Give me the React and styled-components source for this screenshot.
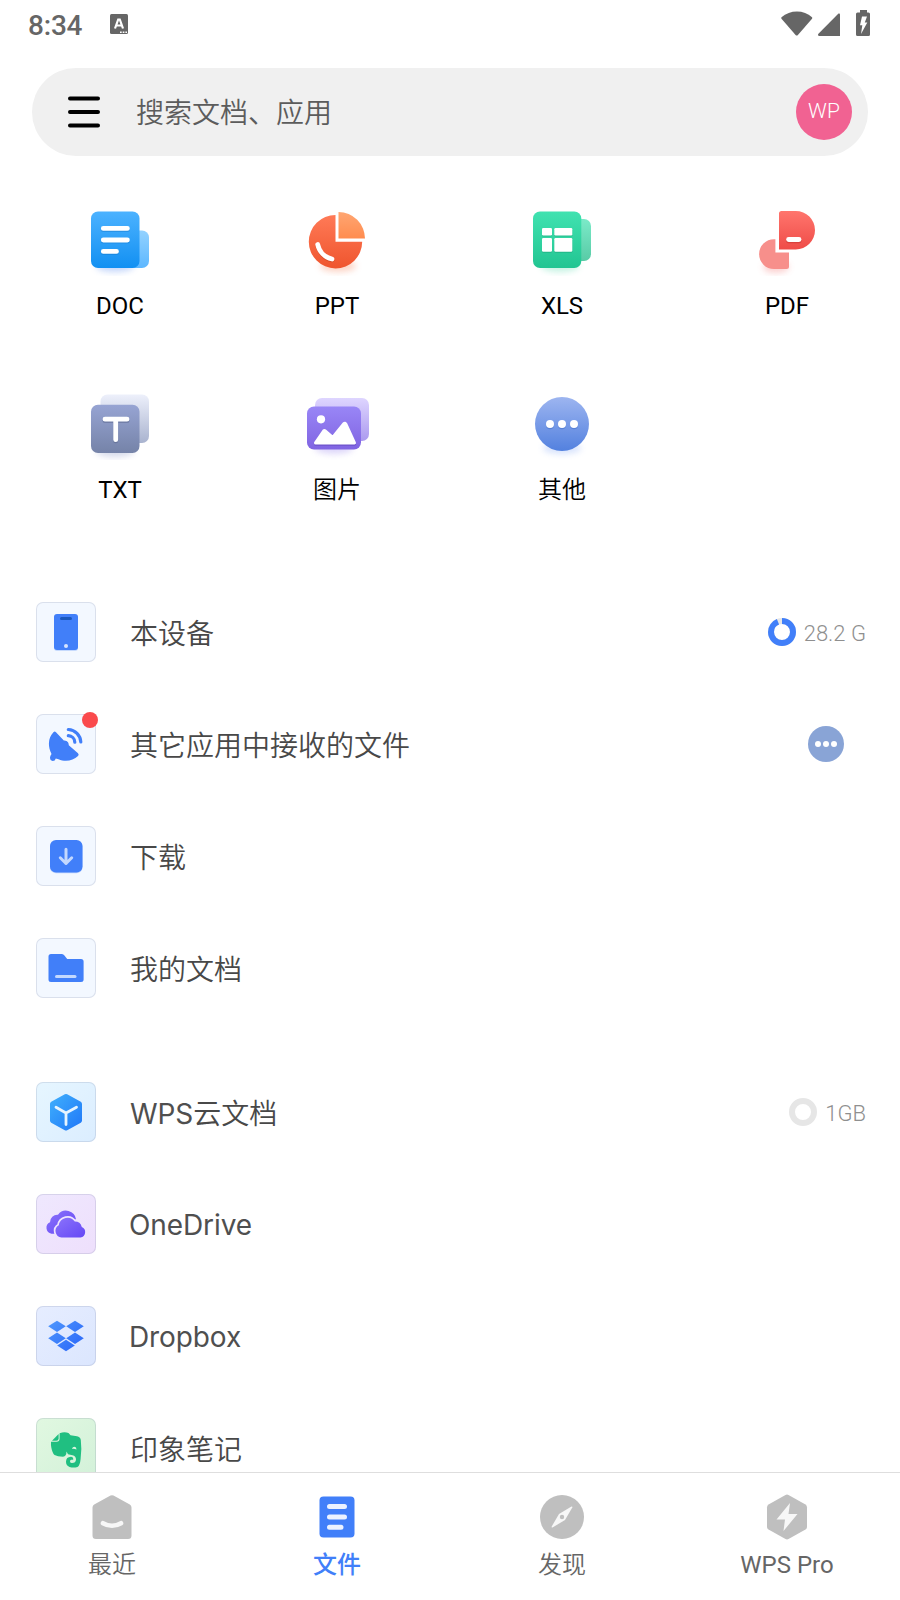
import React from "react";
import styled, { createGlobalStyle } from "styled-components";

const GlobalStyle = createGlobalStyle`
  * {
    box-sizing: border-box;
  }
  body {
    margin: 0;
    background: #fff;
    font-family: Roboto, "Noto Sans CJK SC", sans-serif;
  }
  svg {
    display: block;
  }
`;

const Page = styled.div`
  width: 900px;
  height: 1600px;
  display: flex;
  flex-direction: column;
  overflow: hidden;
  background: #fff;
`;
const StatusBar = styled.div`
  flex: none;
  height: 68px;
  padding: 0 30px 20px 28px;
  display: flex;
  align-items: center;
  color: #666;
`;
const Clock = styled.div`
  font-size: 28px;
  line-height: 32px;
  font-weight: 500;
  letter-spacing: -0.2px;
  margin-top: 3px;
`;
const StatusIcons = styled.div`
  margin-left: auto;
  padding-bottom: 2px;
`;
const InputBadge = styled.div`
  margin-left: 27px;
`;
const SearchBar = styled.div`
  flex: none;
  height: 88px;
  margin: 0 32px;
  padding: 0 16px 0 36px;
  display: flex;
  align-items: center;
  border-radius: 44px;
  background: #f0f0f0;
`;
const Placeholder = styled.div`
  flex: 1;
  margin-left: 36px;
  padding-top: 4px;
  font-size: 28px;
  line-height: 40px;
  font-weight: 350;
  color: #5c5c5c;
`;
const Avatar = styled.div`
  width: 56px;
  height: 56px;
  padding-bottom: 3px;
  display: flex;
  align-items: center;
  justify-content: center;
  border-radius: 50%;
  background: #f16292;
  color: #fff;
  font-size: 21px;
  font-weight: 350;
`;
const Content = styled.div`
  flex: 1;
  min-height: 0;
  overflow: hidden;
`;
const TypeGrid = styled.div`
  padding-top: 48px;
  display: grid;
  grid-template-columns: repeat(4, 225px);
  grid-auto-rows: 184px;
`;
const TypeItem = styled.div`
  display: flex;
  flex-direction: column;
  align-items: center;
  gap: 16px;
  padding-left: ${({ $shifted }) => ($shifted ? "16px" : "0")};
  padding-right: 1px;
`;
const TypeLabel = styled.div`
  font-size: 24px;
  line-height: 28px;
  font-weight: ${({ $latin }) => ($latin ? 400 : 350)};
  white-space: nowrap;
  color: #000;
`;
const Group = styled.div`
  padding: ${({ $first }) => ($first ? "4px" : "32px")} 36px 0;
`;
const Row = styled.div`
  height: 112px;
  display: flex;
  align-items: center;
`;
const Tile = styled.div`
  position: relative;
  width: 60px;
  height: 60px;
  flex: none;
  border-radius: 7px;
  background: ${({ $bg }) => $bg};
  box-shadow: inset 0 0 0 1px rgba(120, 130, 160, 0.2);
`;
const RedDot = styled.div`
  position: absolute;
  top: -2px;
  right: -2px;
  width: 16px;
  height: 16px;
  border-radius: 50%;
  background: #fa4a4c;
`;
const RowTitle = styled.div`
  flex: 1;
  margin-left: ${({ $latin }) => ($latin ? "33px" : "34px")};
  padding-top: ${({ $latin }) => ($latin ? "2px" : "3px")};
  font-family: Inter, "Noto Sans CJK SC", sans-serif;
  font-size: 28px;
  line-height: 40px;
  font-weight: 350;
  color: #484848;
`;
const Latin = styled.span`
  font-weight: 400;
  letter-spacing: -0.1px;
  color: #4f4f4f;
`;
const Usage = styled.div`
  display: flex;
  align-items: center;
  gap: 8px;
  margin-right: -2px;
  font-size: 22px;
  font-weight: 350;
  color: #8f8f8f;
`;
const UsageText = styled.span`
  padding-top: 2px;
`;
const MoreButton = styled.div`
  width: 36px;
  height: 36px;
  margin-right: 20px;
  display: flex;
  align-items: center;
  justify-content: center;
  gap: 2px;
  border-radius: 50%;
  background: #89a4d6;
`;
const MoreDot = styled.span`
  width: 6px;
  height: 6px;
  border-radius: 50%;
  background: #fff;
`;
const TabBar = styled.div`
  flex: none;
  height: 128px;
  display: grid;
  grid-template-columns: repeat(4, 1fr);
  border-top: 1px solid #dedede;
`;
const Tab = styled.div`
  display: flex;
  flex-direction: column;
  align-items: center;
  padding-top: 20px;
  padding-right: 1px;
  gap: 10px;
  font-size: 24px;
  line-height: 28px;
  font-weight: ${({ $active, $latin }) =>
    $active ? 500 : $latin ? 400 : 350};
  color: ${({ $active }) => ($active ? "#417ff9" : "#666")};
`;

const Gradient = ({ id, from, to }) => (
  <linearGradient id={id} x1="0" y1="0" x2="0" y2="1">
    <stop offset="0" stopColor={from} />
    <stop offset="1" stopColor={to} />
  </linearGradient>
);

// Blurred ellipse that sits below every file type icon
const Shadow = ({ id, color, cx = 31, cy = 62, rx = 19 }) => (
  <>
    <filter id={id} x="-50%" y="-100%" width="200%" height="300%">
      <feGaussianBlur stdDeviation="3" />
    </filter>
    <ellipse
      cx={cx}
      cy={cy}
      rx={rx}
      ry="6"
      fill={color}
      opacity="0.45"
      filter={`url(#${id})`}
    />
  </>
);

const Icon72 = ({ children }) => (
  <svg width="72" height="72" viewBox="0 0 72 72" fill="none">
    {children}
  </svg>
);

const DocIcon = () => (
  <Icon72>
    <Gradient id="doc1" from="#4cb2ff" to="#1290f2" />
    <Gradient id="doc2" from="#93d2ff" to="#5db7ff" />
    <Shadow id="docs" color="#7fa6f5" />
    <rect x="40" y="26.5" width="25" height="37.5" rx="7" fill="url(#doc2)" />
    <rect x="7" y="7.5" width="48.5" height="56.5" rx="7" fill="url(#doc1)" />
    <g stroke="#0d6fc4" strokeOpacity="0.35" strokeWidth="5" strokeLinecap="round">
      <path d="M19.3 25.4H43.4M19.3 37H43.4M19.3 48.5H32.5" />
    </g>
    <g stroke="#fff" strokeWidth="4.8" strokeLinecap="round">
      <path d="M19.3 24.4H43.4M19.3 36H43.4M19.3 47.4H32.5" />
    </g>
  </Icon72>
);

const PptIcon = () => (
  <Icon72>
    <Gradient id="ppt1" from="#ff7a57" to="#ef552e" />
    <Gradient id="ppt2" from="#ffa672" to="#ff8c4f" />
    <Shadow id="ppts" color="#f9a080" cx={37} rx={18} />
    <path d="M34.5 11V37.8H61.2A26.7 26.7 0 1 1 34.5 11Z" fill="url(#ppt1)" />
    <path d="M37.5 8A26.7 26.7 0 0 1 64 34.6H37.5Z" fill="url(#ppt2)" />
    <path
      d="M16.7 41.5A19 19 0 0 0 31 55.8"
      stroke="#b93a17"
      strokeOpacity="0.4"
      strokeWidth="5"
      strokeLinecap="round"
    />
    <path
      d="M16.7 40.5A19 19 0 0 0 31 55"
      stroke="#fff"
      strokeWidth="4.8"
      strokeLinecap="round"
    />
  </Icon72>
);

const XlsIcon = () => (
  <Icon72>
    <Gradient id="xls1" from="#40e2b0" to="#22c592" />
    <Gradient id="xls2" from="#7beac8" to="#58cba6" />
    <Shadow id="xlss" color="#7fe3c0" cx={34} />
    <rect x="40" y="15" width="25" height="42" rx="7" fill="url(#xls2)" />
    <rect x="7" y="7.5" width="48.3" height="56.5" rx="7" fill="url(#xls1)" />
    <g fill="#118c63" opacity="0.35">
      <rect x="16" y="25" width="10" height="7.5" rx="1.2" />
      <rect x="28.3" y="25" width="18" height="7.5" rx="1.2" />
      <rect x="16" y="35" width="10" height="13.8" rx="1.2" />
      <rect x="28.3" y="35" width="18" height="13.8" rx="1.2" />
    </g>
    <g fill="#fff">
      <rect x="16" y="24" width="10" height="7.5" rx="1.2" />
      <rect x="28.3" y="24" width="18" height="7.5" rx="1.2" />
      <rect x="16" y="34" width="10" height="13.8" rx="1.2" />
      <rect x="28.3" y="34" width="18" height="13.8" rx="1.2" />
    </g>
  </Icon72>
);

const PdfIcon = () => (
  <Icon72>
    <Gradient id="pdf1" from="#ff756d" to="#ef4c48" />
    <Shadow id="pdfs" color="#f79a98" cx={25} cy={63} rx={13} />
    <path
      d="M24.4 35.2V48.6H38V62.5Q38 65 35.5 65H23A14.9 14.9 0 0 1 23 35.2Z"
      fill="#f78f8b"
    />
    <path
      d="M28 9.5Q28 7 30.5 7H44.8A19.2 19.2 0 0 1 44.8 45.4H28Z"
      fill="url(#pdf1)"
    />
    <path
      d="M37.6 36.7H48"
      stroke="#c22f2c"
      strokeOpacity="0.5"
      strokeWidth="5"
      strokeLinecap="round"
    />
    <path
      d="M37.6 35.5H48"
      stroke="#fff"
      strokeWidth="4.8"
      strokeLinecap="round"
    />
  </Icon72>
);

const TxtIcon = () => (
  <Icon72>
    <Gradient id="txt1" from="#97a4d3" to="#7583a8" />
    <Gradient id="txt2" from="#edf0fb" to="#a9b3cf" />
    <Shadow id="txts" color="#a3aed2" cy={63} />
    <rect x="16.5" y="6.5" width="48.5" height="48.5" rx="7" fill="url(#txt2)" />
    <rect x="7" y="16.7" width="48.5" height="48.3" rx="7" fill="url(#txt1)" />
    <path
      d="M21 32.5H43M31.7 32.5V52.8"
      stroke="#4d5a80"
      strokeOpacity="0.4"
      strokeWidth="5"
      strokeLinecap="round"
    />
    <path
      d="M21 31.2H43M31.7 31.2V51.7"
      stroke="#fff"
      strokeWidth="4.8"
      strokeLinecap="round"
    />
  </Icon72>
);

const PictureIcon = () => (
  <Icon72>
    <Gradient id="pic1" from="#9986f6" to="#8064e2" />
    <Gradient id="pic2" from="#ded5ff" to="#ab9aef" />
    <Shadow id="pics" color="#b3a4f3" cx={33} cy={60} />
    <rect x="14" y="10" width="54" height="43" rx="7" fill="url(#pic2)" />
    <rect x="6" y="18.5" width="54" height="43" rx="7" fill="url(#pic1)" />
    <g fill="#4d33a5" stroke="#4d33a5" strokeLinejoin="round" strokeWidth="3" opacity="0.4">
      <path d="M14.5 56.2L22.6 44.3Q23.4 43.6 24.2 44.3L31.7 50.6L43 37Q44 36.3 44.8 37.5L53.5 56.2Z" />
    </g>
    <path
      d="M14.5 54.9L22.6 43Q23.4 42.3 24.2 43L31.7 49.5L43 35.5Q44 34.8 44.8 36L53.5 54.9Z"
      fill="#fff"
      stroke="#fff"
      strokeWidth="3"
      strokeLinejoin="round"
    />
    <circle cx="20" cy="31.3" r="4.1" fill="#fff" />
  </Icon72>
);

const OtherIcon = () => (
  <Icon72>
    <Gradient id="oth1" from="#9db5f0" to="#5381df" />
    <Shadow id="oths" color="#a6c0f9" cx={36} cy={60} />
    <circle cx="36" cy="36" r="27" fill="url(#oth1)" />
    <g fill="#2f5cb8" opacity="0.35">
      <circle cx="24" cy="37.2" r="4" />
      <circle cx="36" cy="37.2" r="4" />
      <circle cx="48" cy="37.2" r="4" />
    </g>
    <g fill="#fff">
      <circle cx="24" cy="36" r="4" />
      <circle cx="36" cy="36" r="4" />
      <circle cx="48" cy="36" r="4" />
    </g>
  </Icon72>
);

const Icon60 = ({ children }) => (
  <svg width="60" height="60" viewBox="0 0 60 60" fill="none">
    {children}
  </svg>
);

const PhoneIcon = () => (
  <Icon60>
    <rect x="18" y="13" width="24" height="36" rx="3" fill="#417ff9" opacity="0.25" />
    <rect x="18" y="12" width="24" height="36" rx="3" fill="#417ff9" />
    <path d="M25.5 16.5H34.5" stroke="#1a58bd" strokeWidth="3" strokeLinecap="round" />
    <circle cx="30" cy="44" r="2" fill="#d5e4ff" />
  </Icon60>
);

const DishIcon = () => (
  <Icon60>
    <path
      d="M17.4 18.2Q18.7 17 20 18.3L27.8 26.6Q30.8 26.4 32 28.3Q32.8 29.8 32.8 31.2L42 39.3Q43.4 40.7 42 42C37 47 29 48 22.5 45.2L19.8 44.4Q19 47.2 16.6 47Q14 46.5 14 43.5Q14.2 41.5 15.5 40C12 33 11.5 24.5 17.4 18.2Z"
      fill="#417ff9"
    />
    <g stroke="#417ff9" strokeWidth="3.2" strokeLinecap="round">
      <path d="M32.3 15.5A13 13 0 0 1 44.8 28" />
      <path d="M32.3 21.7A6.8 6.8 0 0 1 38.8 28.2" />
    </g>
  </Icon60>
);

const DownloadIcon = () => (
  <Icon60>
    <rect x="14" y="14.8" width="32.5" height="32.5" rx="6" fill="#417ff9" opacity="0.3" />
    <rect x="14" y="14" width="32.5" height="32.5" rx="6" fill="#417ff9" />
    <path
      d="M30 23.2V37.5M24.3 31.8L30 37.5L35.7 31.8"
      stroke="#c3d8fe"
      strokeWidth="3"
      strokeLinecap="round"
      strokeLinejoin="round"
    />
  </Icon60>
);

const FolderIcon = () => (
  <Icon60>
    <path
      d="M12.5 18.5Q12.5 16 15 16H25.5Q27 16 28 17L31.2 21H45Q47.6 21 47.6 23.5V41.5Q47.6 44 45 44H15Q12.5 44 12.5 41.5Z"
      fill="#417ff9"
    />
    <path d="M20.5 38.4H39" stroke="#c3d8fe" strokeWidth="3" strokeLinecap="round" />
  </Icon60>
);

const CloudDocIcon = () => (
  <Icon60>
    <linearGradient id="cube" x1="0" y1="0" x2="1" y2="1">
      <stop offset="0" stopColor="#40b0fc" />
      <stop offset="1" stopColor="#1f77f8" />
    </linearGradient>
    <path
      d="M28.8 12.3Q30 11.6 31.2 12.3L44.8 19.8Q46 20.5 46 22V38.5Q46 40 44.8 40.8L31.2 48.2Q30 48.9 28.8 48.2L15.2 40.8Q14 40 14 38.5V22Q14 20.5 15.2 19.8Z"
      fill="url(#cube)"
    />
    <path
      d="M20 25.2L30 31L40.5 25.2M30 31V42.5"
      stroke="#e6f4ff"
      strokeWidth="2.8"
      strokeLinecap="round"
      strokeLinejoin="round"
    />
  </Icon60>
);

const OneDriveIcon = () => (
  <Icon60>
    <linearGradient id="od1" x1="0" y1="0" x2="1" y2="1">
      <stop offset="0" stopColor="#8b73fb" />
      <stop offset="1" stopColor="#6548f5" />
    </linearGradient>
    <path
      d="M15.5 39.7A6 6 0 0 1 14 28.3A7.3 7.3 0 0 1 22 20.8A10 10 0 0 1 40 25.3C36 25.5 35 27 33 29L20 39.7Z"
      fill="url(#od1)"
    />
    <path
      d="M25.5 43.5A6.6 6.6 0 0 1 22.8 31.2A8.8 8.8 0 0 1 38.8 27.6A7.2 7.2 0 0 1 45.8 33A5.5 5.5 0 0 1 44.5 43.5Z"
      fill="url(#od1)"
      stroke="#eee4fd"
      strokeWidth="3.4"
    />
    <path
      d="M25.5 43.5A6.6 6.6 0 0 1 22.8 31.2A8.8 8.8 0 0 1 38.8 27.6A7.2 7.2 0 0 1 45.8 33A5.5 5.5 0 0 1 44.5 43.5Z"
      fill="url(#od1)"
    />
  </Icon60>
);

const DropboxIcon = () => (
  <Icon60>
    <linearGradient id="dbx" gradientUnits="userSpaceOnUse" x1="12" y1="14" x2="44" y2="46">
      <stop offset="0" stopColor="#4f98fd" />
      <stop offset="1" stopColor="#2a66f8" />
    </linearGradient>
    <g fill="url(#dbx)">
      <path d="M21 14.7L29.8 20.3L21 26L12.2 20.3Z" />
      <path d="M39 14.7L47.8 20.3L39 26L30.2 20.3Z" />
      <path d="M21 26.6L29.8 32.3L21 38L12.2 32.3Z" />
      <path d="M39 26.6L47.8 32.3L39 38L30.2 32.3Z" />
      <path d="M30 33.8L38.8 39.5L30 45.2L21.2 39.5Z" />
    </g>
  </Icon60>
);

const EvernoteIcon = () => (
  <Icon60>
    <path d="M22.6 16V20.5Q22.6 22.8 20.3 22.8H16Z" fill="#20bf81" />
    <path
      d="M23.6 15.2Q28.5 13.5 32.5 15L34.5 17.2L41 18.2Q44.3 18.8 44.8 22Q46 31 44.6 41Q44 47.5 41.5 49Q37.5 50.2 33.5 49Q30 47.5 30 43.8Q30 39 35 38.8Q37 38.8 37.2 40.5V41.8H35.2Q34 42 34 43.5Q34.2 45 36 45Q39.8 45 40 41.5Q40 38 36.5 37.2L32 36.2L30.5 33.5Q30.5 38.5 27 38.7Q21.5 38.7 18.5 37Q16.5 35.5 15.3 29.5Q14.8 26.5 15 23.8H20.5Q23.6 23.8 23.6 20.5Z"
      fill="#20bf81"
    />
    <path d="M36 31Q36.5 28.8 38.5 28.8Q40.5 29 40.5 31.5Q38 30.3 36 31Z" fill="#ddf6e0" />
  </Icon60>
);

const UsageRing = ({ used }) => (
  <svg width="28" height="28" viewBox="0 0 28 28" fill="none">
    <circle cx="14" cy="14" r="11" stroke="#e6e6e6" strokeWidth="6" />
    <circle
      cx="14"
      cy="14"
      r="11"
      stroke="#417ff9"
      strokeWidth="6"
      pathLength="100"
      strokeDasharray={`${used} 100`}
      strokeOpacity={used ? 1 : 0}
      transform="rotate(-90 14 14)"
    />
  </svg>
);

const Icon48 = ({ children }) => (
  <svg width="48" height="48" viewBox="0 0 48 48" fill="none">
    {children}
  </svg>
);

const RecentIcon = () => (
  <Icon48>
    <path
      d="M22.5 2.6Q24 1.7 25.5 2.6L41.8 11.5Q43.5 12.5 43.5 14.5V42.5Q43.5 46 40 46H8Q4.5 46 4.5 42.5V14.5Q4.5 12.5 6.2 11.5Z"
      fill="#bfbfbf"
    />
    <path d="M15 30.2Q24 35.4 33 30.2" stroke="#f7f7f7" strokeWidth="4.6" strokeLinecap="round" />
  </Icon48>
);

const FilesIcon = () => (
  <Icon48>
    <rect x="6.5" y="3.5" width="35" height="41" rx="4" fill="#417ff9" />
    <path
      d="M16.5 13.5H31.5M16.5 24H31.5M16.5 34.3H28"
      stroke="#ebf2ff"
      strokeWidth="5"
      strokeLinecap="round"
    />
  </Icon48>
);

const DiscoverIcon = () => (
  <Icon48>
    <circle cx="24" cy="24" r="22" fill="#bfbfbf" />
    <path
      d="M33.5 13.5Q34.6 13.4 34.3 14.5L27 27L14.5 34.5Q13.4 34.6 13.7 33.5L21 21Z"
      fill="#f7f7f7"
    />
    <circle cx="24" cy="24" r="2.2" fill="#bfbfbf" />
  </Icon48>
);

const ProIcon = () => (
  <Icon48>
    <path
      d="M22.5 2Q24 1.2 25.5 2L42.5 11.6Q44 12.6 44 14.4V34Q44 35.6 42.5 36.5L25.5 46Q24 46.8 22.5 46L5.5 36.5Q4 35.6 4 34V14.4Q4 12.6 5.5 11.6Z"
      fill="#bfbfbf"
    />
    <path d="M27 10L13.5 26.5H22L20.5 38L34.5 21H25.5Z" fill="#f7f7f7" />
  </Icon48>
);

const fileTypes = [
  { label: "DOC", icon: <DocIcon />, latin: true, shifted: true },
  { label: "PPT", icon: <PptIcon />, latin: true },
  { label: "XLS", icon: <XlsIcon />, latin: true },
  { label: "PDF", icon: <PdfIcon />, latin: true },
  { label: "TXT", icon: <TxtIcon />, latin: true, shifted: true },
  { label: "图片", icon: <PictureIcon /> },
  { label: "其他", icon: <OtherIcon /> },
];

const plainTile = "#f3f8ff";

const localPlaces = [
  { title: "本设备", icon: <PhoneIcon />, bg: plainTile, usage: "28.2 G", used: 94 },
  {
    title: "其它应用中接收的文件",
    icon: <DishIcon />,
    bg: plainTile,
    unread: true,
    more: true,
  },
  { title: "下载", icon: <DownloadIcon />, bg: plainTile },
  { title: "我的文档", icon: <FolderIcon />, bg: plainTile },
];

const cloudPlaces = [
  {
    latin: "WPS",
    title: "云文档",
    icon: <CloudDocIcon />,
    bg: "linear-gradient(135deg, #e6f6ff, #dbedff)",
    usage: "1GB",
    used: 0,
  },
  {
    latin: "OneDrive",
    icon: <OneDriveIcon />,
    bg: "linear-gradient(135deg, #efe8fe, #eedffc)",
  },
  {
    latin: "Dropbox",
    icon: <DropboxIcon />,
    bg: "linear-gradient(135deg, #e6edff, #dbe6fe)",
  },
  {
    title: "印象笔记",
    icon: <EvernoteIcon />,
    bg: "linear-gradient(135deg, #e1f8e1, #d3f1d9)",
  },
];

const tabs = [
  { label: "最近", icon: <RecentIcon /> },
  { label: "文件", icon: <FilesIcon />, active: true },
  { label: "发现", icon: <DiscoverIcon /> },
  { label: "WPS Pro", icon: <ProIcon />, latin: true },
];

const PlaceRow = ({ place }) => (
  <Row>
    <Tile $bg={place.bg}>
      {place.icon}
      {place.unread && <RedDot />}
    </Tile>
    <RowTitle $latin={place.latin && !place.title}>
      {place.latin && <Latin>{place.latin}</Latin>}
      {place.title}
    </RowTitle>
    {place.usage && (
      <Usage>
        <UsageRing used={place.used} />
        <UsageText>{place.usage}</UsageText>
      </Usage>
    )}
    {place.more && (
      <MoreButton>
        <MoreDot />
        <MoreDot />
        <MoreDot />
      </MoreButton>
    )}
  </Row>
);

const App = () => {
  return (
    <Page>
      <GlobalStyle />
      <StatusBar>
        <Clock>8:34</Clock>
        <InputBadge>
          <svg width="20" height="20" viewBox="0 0 20 20">
            <rect x="1" y="0" width="18" height="20" rx="1.5" fill="#666" />
            <path
              d="M6 14.5L9.2 5.5H10.8L14 14.5M7.5 11.5H12.5"
              fill="none"
              stroke="#fff"
              strokeWidth="2.2"
            />
            <path d="M11 18.2H18" stroke="#fff" strokeWidth="1.5" strokeDasharray="1.7 1" />
          </svg>
        </InputBadge>
        <StatusIcons>
          <svg width="90" height="28" viewBox="0 0 90 28" fill="#666">
            <path d="M1.5 8.2C10 0.6 24 0.6 32 8.2Q32.6 9 32 9.8L17.7 26.2Q16.7 27 15.8 26.2L1.5 9.8Q0.9 9 1.5 8.2Z" />
            <path d="M58.5 4.5Q60 4 60 5.5V27H39Q37.3 26.5 38.2 25Z" />
            <path d="M80 1H87V3.5H88.5Q90 3.5 90 5V25.5Q90 27 88.5 27H77.5Q76 27 76 25.5V5Q76 3.5 77.5 3.5H80Z" />
            <path d="M82 7.5H87L84.8 13.5H87.3L81 25L82.3 16.2H80Z" fill="#fff" />
          </svg>
        </StatusIcons>
      </StatusBar>
      <SearchBar>
        <svg width="32" height="32" viewBox="0 0 32 32">
          <path
            d="M2 2.6H30M2 16H30M2 29.4H30"
            stroke="#000"
            strokeWidth="4"
            strokeLinecap="round"
          />
        </svg>
        <Placeholder>搜索文档、应用</Placeholder>
        <Avatar>WP</Avatar>
      </SearchBar>
      <Content>
        <TypeGrid>
          {fileTypes.map((type) => (
            <TypeItem key={type.label} $shifted={type.shifted}>
              {type.icon}
              <TypeLabel $latin={type.latin}>{type.label}</TypeLabel>
            </TypeItem>
          ))}
        </TypeGrid>
        <Group $first>
          {localPlaces.map((place) => (
            <PlaceRow key={place.title} place={place} />
          ))}
        </Group>
        <Group>
          {cloudPlaces.map((place) => (
            <PlaceRow key={place.latin || place.title} place={place} />
          ))}
        </Group>
      </Content>
      <TabBar>
        {tabs.map((tab) => (
          <Tab key={tab.label} $active={tab.active} $latin={tab.latin}>
            {tab.icon}
            {tab.label}
          </Tab>
        ))}
      </TabBar>
    </Page>
  );
};

export default App;
